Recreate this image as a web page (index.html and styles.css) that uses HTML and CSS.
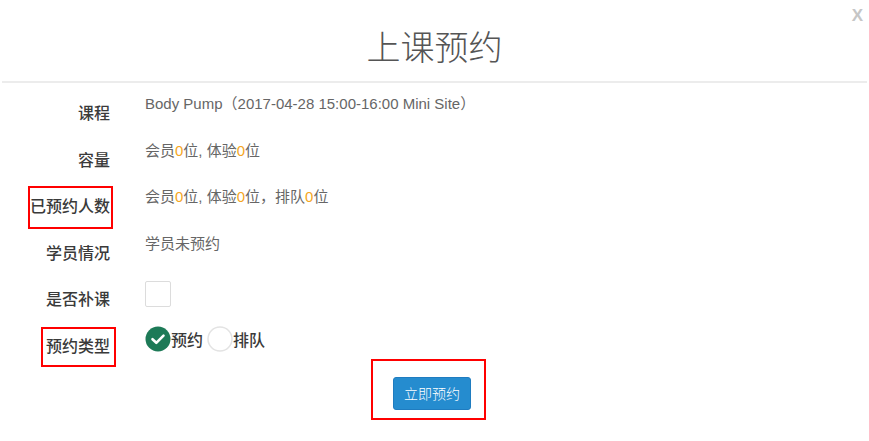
FILE: index.html
```html
<!DOCTYPE html>
<html lang="zh-CN">
<head>
<meta charset="utf-8">
<title>上课预约</title>
<link rel="stylesheet" href="styles.css">
</head>
<body>
<div class="modal">
  <div class="modal-header">
    <span class="close">X</span>
    <h2 class="title">上课预约</h2>
  </div>
  <div class="modal-body">
    <div class="row">
      <div class="label">课程</div>
      <div class="value">Body Pump（2017-04-28 15:00-16:00 Mini Site）</div>
    </div>
    <div class="row">
      <div class="label">容量</div>
      <div class="value">会员<span class="num">0</span>位, 体验<span class="num">0</span>位</div>
    </div>
    <div class="row">
      <div class="label"><span class="mark mark-a">已预约人数</span></div>
      <div class="value">会员<span class="num">0</span>位, 体验<span class="num">0</span>位，排队<span class="num">0</span>位</div>
    </div>
    <div class="row">
      <div class="label">学员情况</div>
      <div class="value">学员未预约</div>
    </div>
    <div class="row">
      <div class="label">是否补课</div>
      <div class="value"><span class="checkbox"></span></div>
    </div>
    <div class="row">
      <div class="label"><span class="mark mark-b">预约类型</span></div>
      <div class="value radios">
        <span class="radio checked"><svg viewBox="0 0 26 26" width="26" height="26"><circle cx="13" cy="13" r="12.5" fill="#1d7a57"/><path d="M7.5 13.2 L11.3 16.8 L18.5 9.6" fill="none" stroke="#fff" stroke-width="2.6" stroke-linecap="round" stroke-linejoin="round"/></svg></span><span class="radio-text">预约</span>
        <span class="radio"><svg viewBox="0 0 26 26" width="26" height="26"><circle cx="13" cy="13" r="12" fill="#fff" stroke="#e3e3e3" stroke-width="1.5"/></svg></span><span class="radio-text">排队</span>
      </div>
    </div>
    <div class="actions">
      <div class="btn-wrap">
        <button class="btn" type="button">立即预约</button>
      </div>
    </div>
  </div>
</div>
</body>
</html>
```
FILE: styles.css
```css
html, body {
  margin: 0;
  padding: 0;
  background: #fff;
}
body {
  font-family: "Liberation Sans", "Noto Sans CJK SC", sans-serif;
  color: #333;
  width: 869px;
  height: 441px;
  overflow: hidden;
}
.modal {
  position: relative;
  padding: 0 2px;
}
.modal-header {
  position: relative;
  height: 81px;
  border-bottom: 2px solid #ececec;
  text-align: center;
}
.title {
  margin: 0;
  padding-top: 23px;
  font-family: "Noto Sans CJK SC", sans-serif;
  font-weight: 300;
  font-size: 34px;
  line-height: 46px;
  color: #555;
}
.close {
  position: absolute;
  right: 4px;
  top: 4px;
  font-family: "Liberation Sans", sans-serif;
  font-weight: bold;
  font-size: 17px;
  line-height: 24px;
  color: #c6c6c6;
}
.modal-body {
  padding-top: 10px;
}
.row {
  display: grid;
  grid-template-columns: 108px 1fr;
  column-gap: 35px;
  height: 46.6px;
}
.label {
  text-align: right;
  font-family: "Noto Sans CJK SC", sans-serif;
  font-size: 16px;
  line-height: 22px;
  padding-top: 8px;
  color: #3a3a3a;
  font-weight: 500;
}
.value {
  font-size: 15px;
  line-height: 20px;
  color: #666;
  padding-top: 1px;
}
.num {
  color: #f5a623;
}
.mark {
  position: relative;
  display: inline-block;
}
.mark::after {
  content: "";
  position: absolute;
  border: 2px solid #f00;
}
.mark-a::after {
  left: -2px;
  right: -3px;
  top: -8px;
  bottom: -13px;
}
.mark-b::after {
  left: -5px;
  right: -6px;
  top: -7px;
  bottom: -11px;
}
.checkbox {
  display: inline-block;
  margin-top: 1px;
  width: 24px;
  height: 24px;
  border: 1px solid #dcdcdc;
  border-radius: 2px;
}
.radios {
  display: flex;
  align-items: center;
  height: 26px;
  margin-top: -1px;
}
.radio {
  display: inline-flex;
  width: 26px;
  height: 26px;
}
.radio-text {
  font-family: "Noto Sans CJK SC", sans-serif;
  font-size: 16px;
  color: #3a3a3a;
  font-weight: 500;
  margin-right: 4px;
}
.actions {
  display: flex;
  justify-content: center;
  margin-top: -14px;
}
.btn-wrap {
  padding: 16px 13px 8px 20px;
  border: 2px solid #f00;
  margin-right: 12px;
}
.btn {
  display: block;
  width: 78px;
  height: 33px;
  padding: 0;
  border: 1px solid #1f7cc0;
  border-radius: 3px;
  background: #258ccf;
  color: #fff;
  font-family: "Noto Sans CJK SC", sans-serif;
  font-size: 14px;
  font-weight: 300;
}
```
